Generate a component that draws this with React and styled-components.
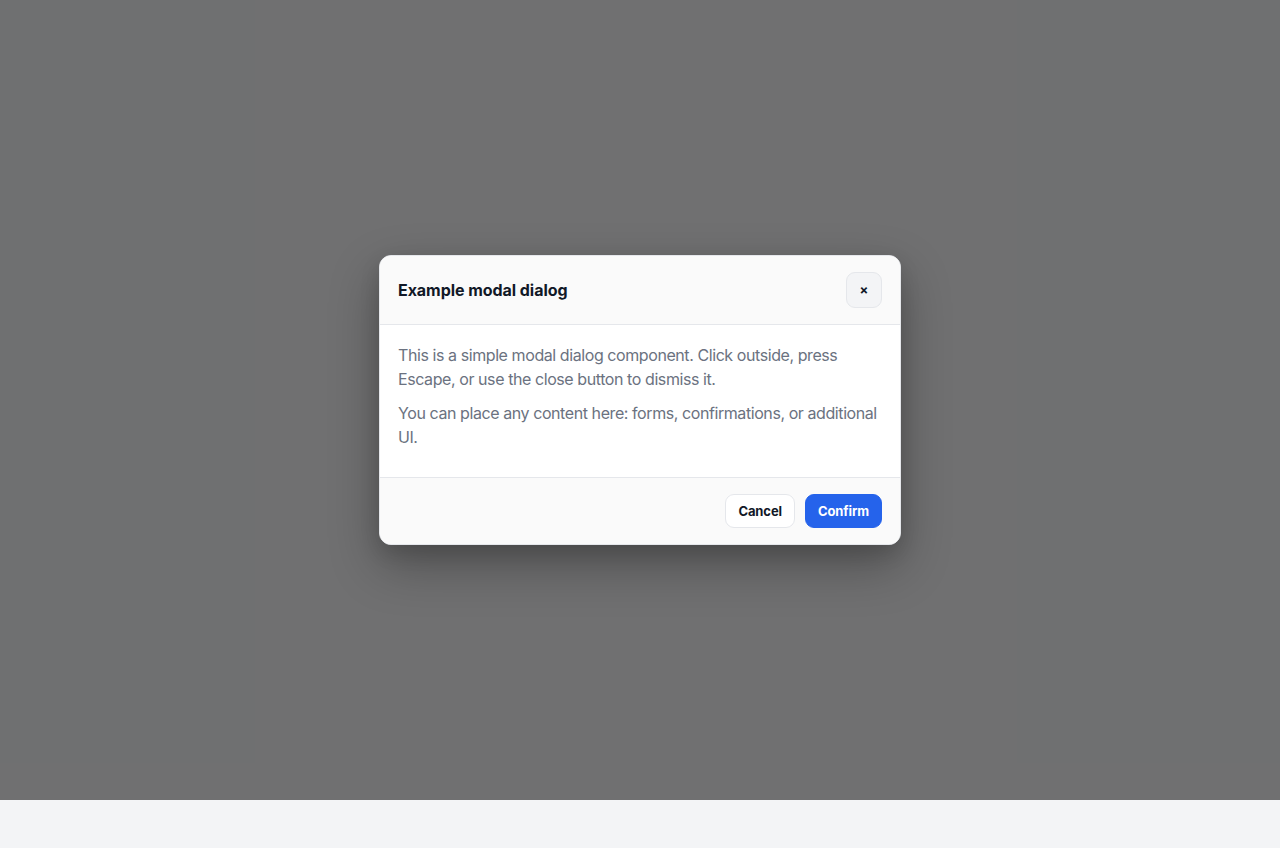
import React from "react";
import styled, { createGlobalStyle } from "styled-components";

const GlobalStyle = createGlobalStyle`
  html, body { margin: 0; padding: 0; }
  body {
    background: #f3f4f6;
    font-family: Inter, "Noto Sans", "Liberation Sans", sans-serif;
    min-height: 848px;
  }
  * { box-sizing: border-box; }
`;

const Overlay = styled.div`
  height: 800px;
  background: rgba(0, 0, 0, 0.54);
  display: flex;
  align-items: center;
  justify-content: center;
`;

const Dialog = styled.div`
  width: 522px;
  background: #ffffff;
  border: 1px solid #e5e7eb;
  border-radius: 12px;
  overflow: hidden;
  box-shadow: 0 20px 50px rgba(0, 0, 0, 0.3), 0 8px 20px rgba(0, 0, 0, 0.12);
`;

const Header = styled.div`
  display: flex;
  align-items: center;
  justify-content: space-between;
  padding: 16px 18px;
  background: #fafafa;
  border-bottom: 1px solid #e5e7eb;
`;

const Title = styled.h2`
  margin: 0;
  font-size: 16px;
  font-weight: 700;
  color: #111827;
  line-height: 24px;
  letter-spacing: -0.05px;
`;

const CloseButton = styled.button`
  width: 36px;
  height: 36px;
  border-radius: 9px;
  border: 1px solid #e5e7eb;
  background: #f3f4f6;
  color: #111827;
  font-family: inherit;
  font-size: 13px;
  font-weight: 700;
  line-height: 1;
  display: flex;
  align-items: center;
  justify-content: center;
  padding: 0;
  cursor: pointer;
`;

const Body = styled.div`
  padding: 18px;
`;

const Paragraph = styled.p`
  margin: 0 0 10px;
  font-size: 16px;
  line-height: 24px;
  letter-spacing: -0.42px;
  color: #6b7280;
`;

const Footer = styled.div`
  display: flex;
  justify-content: flex-end;
  gap: 10px;
  padding: 16px 18px;
  background: #fafafa;
  border-top: 1px solid #e5e7eb;
`;

const Button = styled.button`
  height: 34px;
  padding: 0 12px;
  border-radius: 9px;
  font-family: inherit;
  font-size: 13px;
  font-weight: 700;
  letter-spacing: -0.1px;
  cursor: pointer;
  border: 1px solid ${(p) => (p.$primary ? "#2563eb" : "#e5e7eb")};
  background: ${(p) => (p.$primary ? "#2563eb" : "#ffffff")};
  color: ${(p) => (p.$primary ? "#ffffff" : "#111827")};
`;

export default function App() {
  return (
    <>
      <GlobalStyle />
      <Overlay>
        <Dialog role="dialog" aria-modal="true">
          <Header>
            <Title>Example modal dialog</Title>
            <CloseButton aria-label="Close">×</CloseButton>
          </Header>
          <Body>
            <Paragraph>
              This is a simple modal dialog component. Click outside, press
              Escape, or use the close button to dismiss it.
            </Paragraph>
            <Paragraph>
              You can place any content here: forms, confirmations, or
              additional UI.
            </Paragraph>
          </Body>
          <Footer>
            <Button>Cancel</Button>
            <Button $primary>Confirm</Button>
          </Footer>
        </Dialog>
      </Overlay>
    </>
  );
}
